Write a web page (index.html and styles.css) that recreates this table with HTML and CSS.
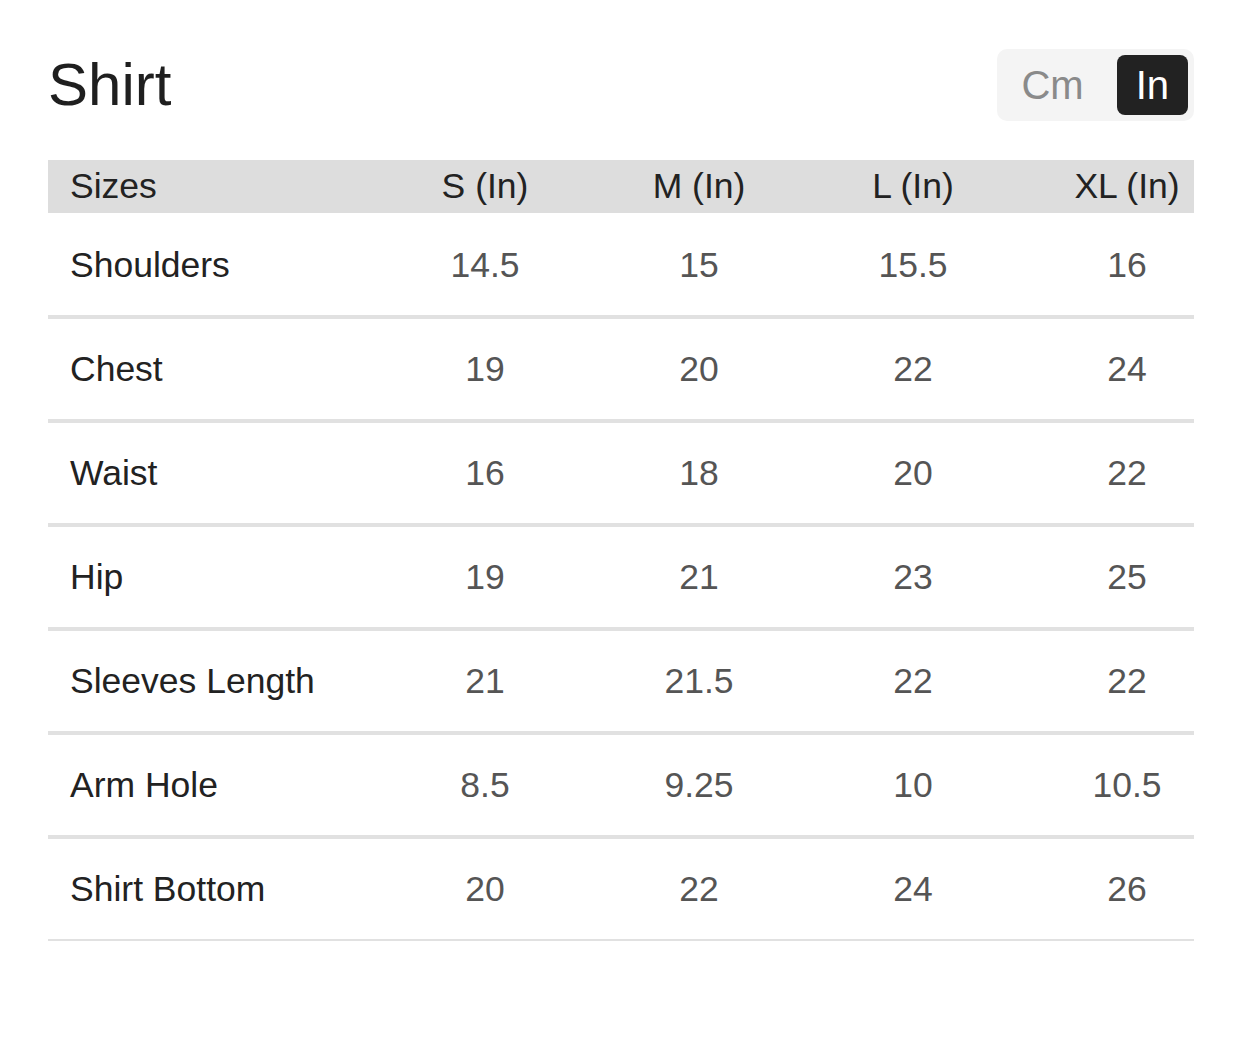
FILE: index.html
```html
<!DOCTYPE html>
<html lang="en">
<head>
<meta charset="utf-8">
<title>Shirt size chart</title>
<link rel="stylesheet" href="styles.css">
</head>
<body>
<main class="page">
  <header class="top">
    <h1 class="title">Shirt</h1>
    <div class="units">
      <button class="unit">Cm</button>
      <button class="unit active">In</button>
    </div>
  </header>
  <table class="chart">
    <colgroup>
      <col class="c-label"><col class="c-val"><col class="c-val"><col class="c-val"><col class="c-last">
    </colgroup>
    <thead>
      <tr><th class="label">Sizes</th><th>S (In)</th><th>M (In)</th><th>L (In)</th><th class="last">XL (In)</th></tr>
    </thead>
    <tbody>
      <tr><td class="label">Shoulders</td><td>14.5</td><td>15</td><td>15.5</td><td class="last">16</td></tr>
      <tr><td class="label">Chest</td><td>19</td><td>20</td><td>22</td><td class="last">24</td></tr>
      <tr><td class="label">Waist</td><td>16</td><td>18</td><td>20</td><td class="last">22</td></tr>
      <tr><td class="label">Hip</td><td>19</td><td>21</td><td>23</td><td class="last">25</td></tr>
      <tr><td class="label">Sleeves Length</td><td>21</td><td>21.5</td><td>22</td><td class="last">22</td></tr>
      <tr><td class="label">Arm Hole</td><td>8.5</td><td>9.25</td><td>10</td><td class="last">10.5</td></tr>
      <tr><td class="label">Shirt Bottom</td><td>20</td><td>22</td><td>24</td><td class="last">26</td></tr>
    </tbody>
  </table>
</main>
</body>
</html>
```

FILE: styles.css
```css
* { box-sizing: border-box; }

html, body {
  margin: 0;
  padding: 0;
  background: #ffffff;
}

body {
  font-family: "Liberation Sans", Arial, Helvetica, sans-serif;
  color: #222222;
}

.page {
  padding: 49px 49px 0 48px;
}

.top {
  display: flex;
  align-items: center;
  justify-content: space-between;
  height: 72px;
  margin-bottom: 39px;
}

.title {
  margin: 0;
  font-size: 60px;
  font-weight: 400;
  line-height: 70px;
  color: #1f1f1f;
}

.units {
  display: flex;
  gap: 15px;
  padding: 6px;
  background: #f4f4f4;
  border-radius: 10px;
}

.unit {
  font-family: inherit;
  font-size: 40px;
  line-height: 60px;
  height: 60px;
  padding: 0 18px;
  border: 0;
  border-radius: 8px;
  background: transparent;
  color: #8a8a8a;
  cursor: pointer;
}

.unit.active {
  background: #222222;
  color: #ffffff;
  padding: 0 19px;
}

.chart {
  width: 1146px;
  table-layout: fixed;
  border-collapse: separate;
  border-spacing: 0;
  font-size: 35.5px;
}

.c-label { width: 330px; }
.c-val { width: 214px; }
.c-last { width: 174px; }

.chart th {
  height: 53px;
  line-height: 53px;
  padding: 0;
  font-weight: 400;
  text-align: center;
  background: #dddddd;
  color: #222222;
}

.chart td {
  height: 104px;
  line-height: 100px;
  padding: 0;
  text-align: center;
  color: #555555;
  border-top: 2px solid #e1e1e1;
  border-bottom: 2px solid #e1e1e1;
}

.chart tbody tr:first-child td {
  border-top-color: transparent;
}

.chart .label {
  text-align: left;
  padding-left: 22px;
  color: #222222;
}

.chart .last {
  padding-left: 40px;
}
```
